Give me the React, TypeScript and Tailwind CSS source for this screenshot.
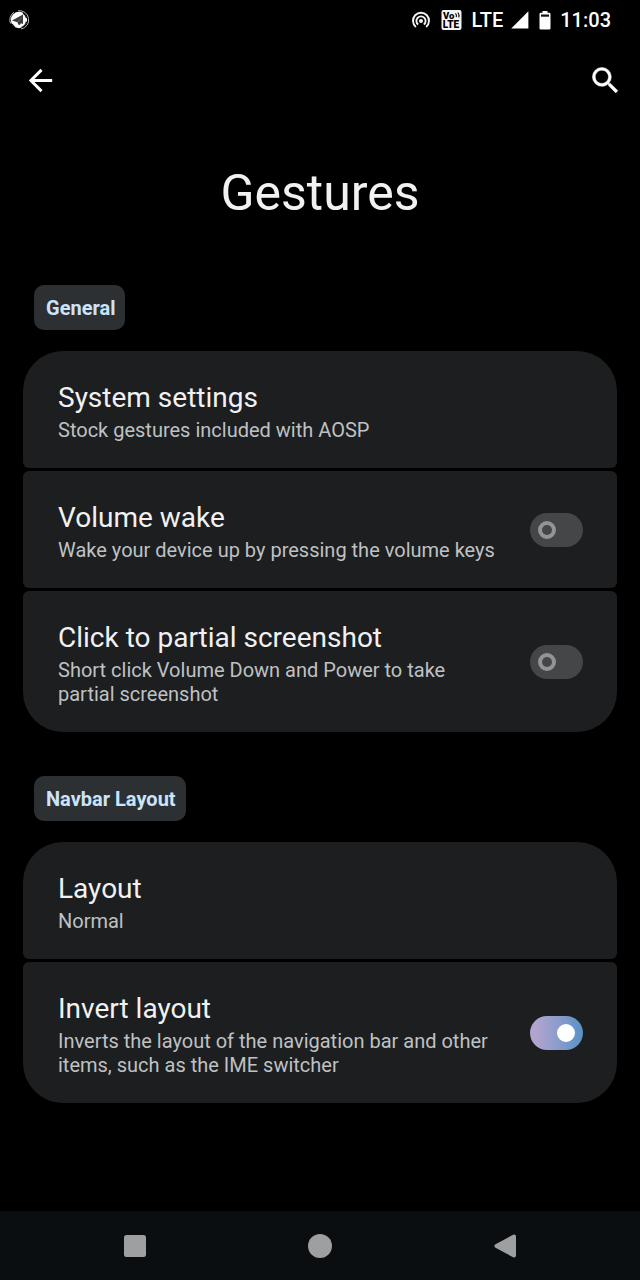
import { useState } from 'react';

type Item = {
  id: string;
  title: string;
  summary: string;
  toggle?: boolean;
  initial?: boolean;
};

const general: Item[] = [
  { id: 'system', title: 'System settings', summary: 'Stock gestures included with AOSP' },
  {
    id: 'volume-wake',
    title: 'Volume wake',
    summary: 'Wake your device up by pressing the volume keys',
    toggle: true,
  },
  {
    id: 'partial-screenshot',
    title: 'Click to partial screenshot',
    summary: 'Short click Volume Down and Power to take partial screenshot',
    toggle: true,
  },
];

const navbar: Item[] = [
  { id: 'layout', title: 'Layout', summary: 'Normal' },
  {
    id: 'invert-layout',
    title: 'Invert layout',
    summary: 'Inverts the layout of the navigation bar and other items, such as the IME switcher',
    toggle: true,
    initial: true,
  },
];

const rowClass =
  'flex w-full items-center gap-7 rounded-md bg-[#1c1e1f] pt-[30px] pr-[34px] pb-[26px] pl-[35px] text-left group-first:rounded-t-[40px] group-last:rounded-b-[40px]';

function RowText({ item }: { item: Item }) {
  return (
    <span className="flex min-w-0 flex-1 flex-col gap-[3px]">
      <span className="text-[28px] leading-[34px] text-[#f1f1f3]">{item.title}</span>
      <span className="text-xl leading-6 text-[#bfc1c4]">{item.summary}</span>
    </span>
  );
}

function ToggleRow({ item }: { item: Item }) {
  const [on, setOn] = useState(Boolean(item.initial));
  return (
    <label htmlFor={item.id} className={rowClass}>
      <RowText item={item} />
      <input
        id={item.id}
        type="checkbox"
        role="switch"
        checked={on}
        onChange={(e) => setOn(e.target.checked)}
        className="-mt-1 flex h-[34px] w-[53px] shrink-0 appearance-none items-center rounded-full bg-[#454647] px-2 before:size-[18px] before:rounded-full before:border-4 before:border-[#939495] before:content-[''] checked:justify-end checked:bg-linear-to-r checked:from-[#b3a4cf] checked:from-10% checked:to-[#5692c6] checked:before:border-white checked:before:bg-white"
      />
    </label>
  );
}

function Section({ name, items }: { name: string; items: Item[] }) {
  return (
    <section className="flex flex-col items-start gap-[21px]">
      <h2 className="ml-[11px] rounded-[10px] bg-[#2c3033] pt-[11px] pr-[10px] pb-[9px] pl-3 text-xl leading-[25px] font-bold text-[#cbe3fb]">
        {name}
      </h2>
      <ul className="flex w-full flex-col gap-[3px]">
        {items.map((item) => (
          <li key={item.id} className="group">
            {item.toggle ? (
              <ToggleRow item={item} />
            ) : (
              <button type="button" className={rowClass}>
                <RowText item={item} />
              </button>
            )}
          </li>
        ))}
      </ul>
    </section>
  );
}

function StatusBar() {
  return (
    <div className="flex h-10 items-center justify-between pr-[29px] pl-[9px]">
      <svg viewBox="0 0 20 20" className="size-5" aria-hidden="true">
        <circle cx="10" cy="10" r="8.200" fill="#fff" />
        <path d="M1.500 13.500A9.200 9.200 0 0 1 5 2.300M9 .800A9.200 9.200 0 0 1 12 19" fill="none" stroke="#bbb" strokeWidth="1" />
        <path d="M3 14a8 8 0 0 0 2.500 2.700M12.500 17.600a8 8 0 0 0 5-6M14 3a8.200 8.200 0 0 1 3.600 5" fill="none" stroke="#111" strokeWidth="1.300" />
        <path d="M3 10.500 14 4.500V14l-2-.800-1.200 1.800-1.600-.400-.700-2.400z" fill="#3c3c3c" />
        <path d="m8.500 12.200 4.500-5" stroke="#777" strokeWidth=".8" />
      </svg>
      <div className="flex items-center text-white">
        <svg viewBox="0 0 20 20" className="mr-[10px] size-5" fill="none" stroke="#f4f4f4" strokeWidth="1.900" aria-hidden="true">
          <circle cx="10" cy="11" r="2" fill="#f4f4f4" stroke="none" />
          <path d="M4.900 16.900A8 8 0 1 1 15.100 16.900" />
          <path d="M7.200 14.600A4.600 4.600 0 1 1 12.800 14.600" />
        </svg>
        <svg viewBox="0 0 21 20" className="mr-[9px] h-5 w-[21px]" role="img" aria-label="VoLTE">
          <rect x=".5" width="20" height="20" rx="2" fill="#f4f4f4" />
          <text x="2" y="9" fontFamily="Roboto, sans-serif" fontSize="9.500" fontWeight="900" fill="#000">Vo</text>
          <text x="1.800" y="18" fontFamily="Roboto, sans-serif" fontSize="10" fontWeight="900" fill="#000">LTE</text>
          <path d="M14.500 3.300q1.400 1.400.800 3.800M16.800 2.500q1.800 2 1 4.800" fill="none" stroke="#000" strokeWidth="1.100" />
        </svg>
        <span className="mr-2 text-xl leading-6 font-medium">LTE</span>
        <svg viewBox="0 0 18 18" className="mr-[10px] size-[18px]" fill="#fff" aria-hidden="true">
          <path d="M17.400.300v17.200H.200z" />
        </svg>
        <svg viewBox="0 0 12 20" className="mr-[9px] h-5 w-3" aria-hidden="true">
          <path d="M3.500 1h5v1.800h1.700q1.300 0 1.300 1.300v14.200q0 1.200-1.300 1.200H1.800Q.5 19.500.5 18.300V4.100Q.5 2.800 1.800 2.800H3.500z" fill="#fff" />
          <path d="M2 4.500h8v2.200H2z" fill="#111" />
        </svg>
        <span className="text-xl leading-6 font-medium">11:03</span>
      </div>
    </div>
  );
}

export default function App() {
  return (
    <div className="flex min-h-screen flex-col bg-black font-['Roboto',sans-serif]">
      <StatusBar />
      <header className="flex h-20 items-center justify-between px-[17px]">
        <button type="button" aria-label="Back" className="flex size-[47px] items-center justify-center">
          <svg viewBox="0 0 24 24" className="size-[35px]" fill="#fff" aria-hidden="true">
            <path d="M20 11H7.830l5.590-5.590L12 4l-8 8 8 8 1.410-1.410L7.830 13H20z" />
          </svg>
        </button>
        <button type="button" aria-label="Search" className="-mr-[6px] flex size-[47px] items-center justify-center">
          <svg viewBox="0 0 24 24" className="size-[35px]" fill="#fff" stroke="#fff" strokeWidth=".3" aria-hidden="true">
            <path d="M15.500 14h-.790l-.280-.270A6.471 6.471 0 0 0 16 9.500 6.500 6.500 0 1 0 9.500 16c1.610 0 3.090-.590 4.230-1.570l.270.280v.790l5 4.990L20.490 19l-4.990-5zm-6 0C7.010 14 5 11.990 5 9.500S7.010 5 9.500 5 14 7.010 14 9.500 11.990 14 9.500 14z" />
          </svg>
        </button>
      </header>
      <main className="flex flex-1 flex-col px-[23px] pt-[41px] pb-10">
        <h1 className="mb-[60px] text-center text-[50px] leading-[64px] text-[#f1f1f3]">Gestures</h1>
        <div className="flex flex-col gap-11">
          <Section name="General" items={general} />
          <Section name="Navbar Layout" items={navbar} />
        </div>
      </main>
      <nav className="flex h-[69px] items-center bg-[#0a0e11] px-[42px] text-[#9d9fa1]" aria-label="System navigation">
        <button type="button" aria-label="Recents" className="flex flex-1 justify-center">
          <svg viewBox="0 0 24 24" className="size-6" fill="currentColor" aria-hidden="true">
            <rect x="1" y="1" width="22" height="22" rx="2.500" />
          </svg>
        </button>
        <button type="button" aria-label="Home" className="flex flex-1 justify-center">
          <svg viewBox="0 0 24 24" className="size-6" fill="currentColor" aria-hidden="true">
            <circle cx="12" cy="12" r="12" />
          </svg>
        </button>
        <button type="button" aria-label="Back" className="flex flex-1 justify-center">
          <svg viewBox="0 0 24 24" className="size-6" fill="currentColor" stroke="currentColor" strokeWidth="4" strokeLinejoin="round" aria-hidden="true">
            <path d="M3.500 12 21 2.500v19z" />
          </svg>
        </button>
      </nav>
    </div>
  );
}
